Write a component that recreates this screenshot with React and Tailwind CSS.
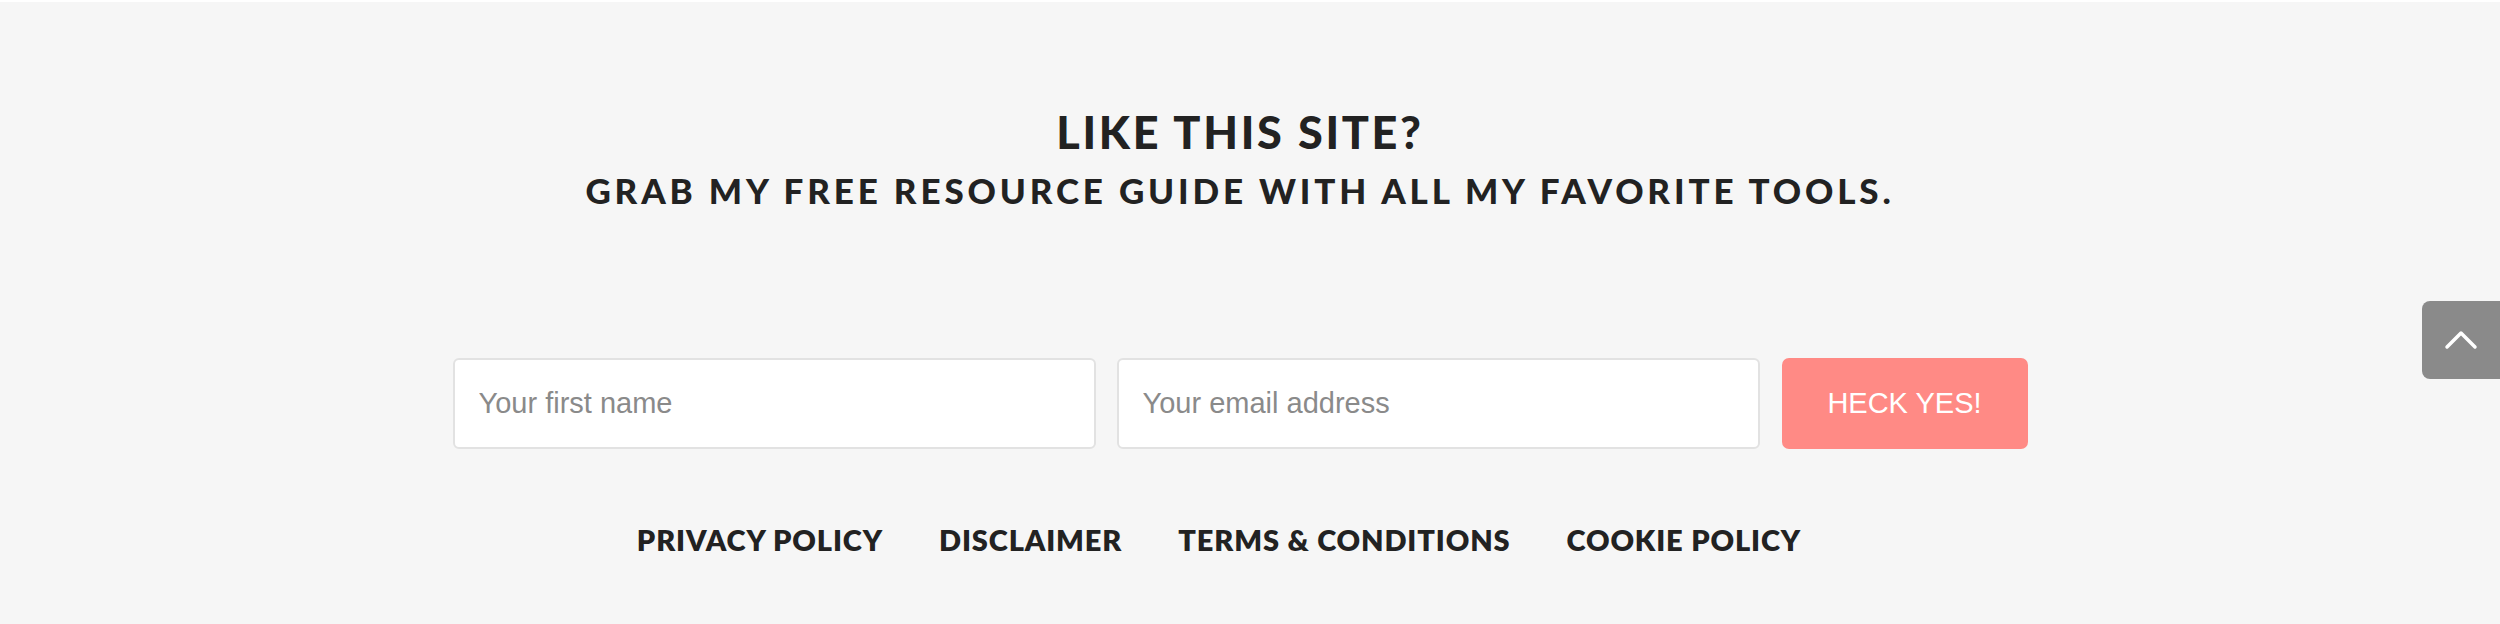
import React from 'react';

const links = ['Privacy Policy', 'Disclaimer', 'Terms & Conditions', 'Cookie Policy'];

export default function App() {
  return (
    <div className="relative h-[624px] w-full overflow-hidden border-t-2 border-white bg-[#f6f6f6] font-['Lato',sans-serif] text-[#222]">
      <div className="flex flex-col items-center pr-[20px]">
        <h2 className="mt-[106px] text-[45px] font-black uppercase leading-[1.1] tracking-[0.06em]">
          Like this site?
        </h2>
        <h3 className="mt-[13px] text-[35px] font-black uppercase leading-[1.1] tracking-[0.11em]">
          Grab my free resource guide with all my favorite tools.
        </h3>

        <form className="mt-[149px] flex gap-[21px] font-['Liberation_Sans',Arial,sans-serif]">
          <input
            type="text"
            placeholder="Your first name"
            className="h-[91px] w-[643px] rounded-[6px] border-2 border-[#e2e2e2] bg-white px-[24px] text-[29px] text-[#444] outline-none placeholder:text-[#8a8a8a]"
          />
          <input
            type="email"
            placeholder="Your email address"
            className="h-[91px] w-[643px] rounded-[6px] border-2 border-[#e2e2e2] bg-white px-[24px] text-[29px] text-[#444] outline-none placeholder:text-[#8a8a8a]"
          />
          <button
            type="button"
            className="ml-[1px] h-[91px] w-[246px] rounded-[7px] bg-[#ff8a85] text-[29px] uppercase text-white"
          >
            Heck yes!
          </button>
        </form>

        <nav className="mt-[76px] flex gap-[56px] pr-[42px]">
          {links.map((l) => (
            <a key={l} href="#" className="text-[29px] font-extrabold uppercase leading-none tracking-[0.03em] text-[#222]">
              {l}
            </a>
          ))}
        </nav>
      </div>

      <button
        type="button"
        className="absolute right-0 top-[299px] flex h-[78px] w-[78px] items-center justify-center rounded-l-[8px] bg-[#8a8a8a]"
      >
        <svg width="34" height="20" viewBox="0 0 34 20" fill="none" stroke="white" strokeWidth="3.5" strokeLinecap="round" strokeLinejoin="round">
          <path d="M3 17 L17 3 L31 17" />
        </svg>
      </button>
    </div>
  );
}
